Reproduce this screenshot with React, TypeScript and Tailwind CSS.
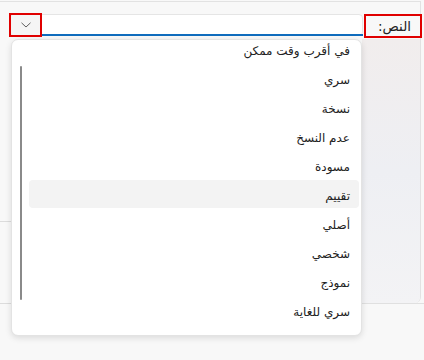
import React from "react";

const items = [
  "في أقرب وقت ممكن",
  "سري",
  "نسخة",
  "عدم النسخ",
  "مسودة",
  "تقييم",
  "أصلي",
  "شخصي",
  "نموذج",
  "سري للغاية",
];

export default function App() {
  const font = { fontFamily: '"Segoe UI", "DejaVu Sans", "Noto Sans", sans-serif' };
  return (
    <div className="relative w-[424px] h-[360px] overflow-hidden bg-[#f8f8f8]" style={font}>
      {/* background panel */}
      <div className="mt-[1px] w-[421px] h-[302px] border-t border-r border-[#e2e2e2] rounded-br-[6px] flex flex-col">
        {/* combobox row */}
        <div className="flex items-start pt-[12px] pl-[10px] h-[37px]">
          <div className="w-[353px] h-[22px] bg-white border border-[#e5e5e5] rounded-[4px] flex items-stretch overflow-hidden">
            <div className="w-[30px] bg-[#f5f5f5] flex items-center justify-center rounded-tl-[3px]">
              <svg width="10" height="6" viewBox="0 0 10 6">
                <polyline points="0.5,0.8 5,5 9.5,0.8" fill="none" stroke="#5f5f5f" strokeWidth="1" />
              </svg>
            </div>
            <div className="flex-1" />
          </div>
          <div className="flex-1 flex justify-end pr-[9px] pt-[2px]">
            <span dir="rtl" className="text-[13.5px] leading-[20px] text-[#222]">النص:</span>
          </div>
        </div>
        {/* body strips */}
        <div className="flex-1 flex">
          <div className="w-[11px] flex flex-col">
            <div className="h-[182px]" />
            <div className="h-[1px] bg-[#dcdcdc]" />
          </div>
          <div className="flex-1" />
          <div className="w-[58px] bg-gradient-to-b from-[#f1eded] via-[#eeeff3] to-[#f3f3f5] rounded-br-[6px]" />
        </div>
      </div>
      <div className="flex">
        <div className="w-[11px] h-[1px] bg-[#dcdcdc]" />
        <div className="flex-1" />
        <div className="w-[62px] h-[1px] bg-[#e0e0e0]" />
      </div>

      {/* blue focus line */}
      <div className="absolute left-[40px] top-[34px] w-[323px] h-[2px] bg-[#0f6cbd]" />

      {/* dropdown menu */}
      <div className="absolute left-[11px] top-[39px] w-[351px] h-[297px] bg-white border border-[#e3e3e3] rounded-[7px] shadow-[0_2px_6px_rgba(0,0,0,0.12)] overflow-hidden">
        <div className="absolute left-[8px] top-[26px] w-[2px] h-[234px] bg-[#8a8a8a] rounded-full" />
        <div dir="rtl" className="flex flex-col gap-[1px] -mt-[5px] pr-[2px] pl-[17px]">
          {items.map((t, i) => (
            <div
              key={t}
              className={
                "h-[28px] flex items-center pt-[4px] pr-[9px] rounded-[4px] text-[12px] text-[#222] " +
                (i === 5 ? "bg-[#f3f3f3]" : "")
              }
            >
              {t}
            </div>
          ))}
        </div>
      </div>

      {/* red annotation boxes */}
      <div className="absolute left-[9px] top-[13px] w-[33px] h-[24px] border-2 border-[#e00000]" />
      <div className="absolute left-[364px] top-[14px] w-[58px] h-[24px] border-2 border-[#e00000]" />
    </div>
  );
}
